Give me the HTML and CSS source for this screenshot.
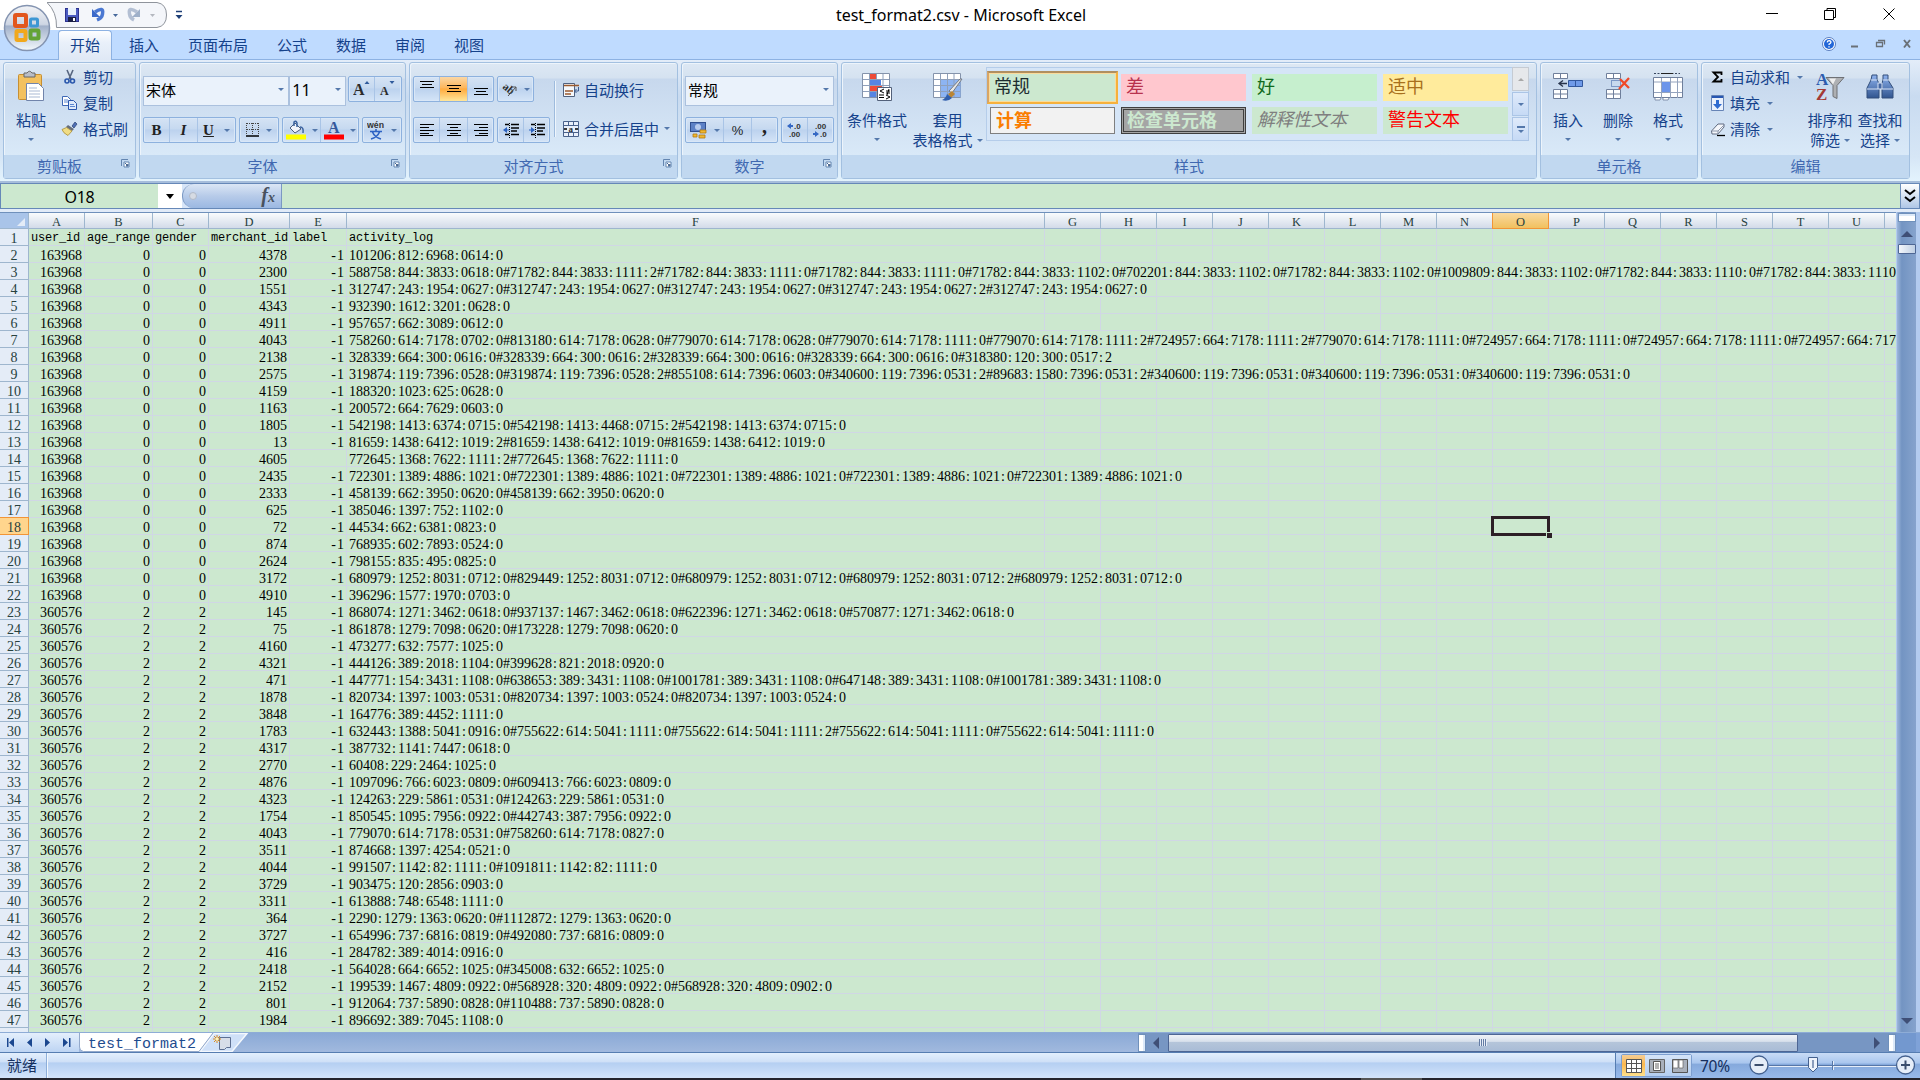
FILE: index.html
```html
<!DOCTYPE html>
<html lang="zh-CN">
<head>
<meta charset="utf-8">
<title>test_format2.csv - Microsoft Excel</title>
<link rel="stylesheet" href="styles.css">
</head>
<body>
<div class="app">
  <header class="titlebar">
    <svg class="quick" width="200" height="30" viewBox="0 0 200 30">
      <path d="M0 2.500H110Q119.500 4 119.500 15T110 27.500H9.500Q10 12 0 2.500Z" fill="#f4f6fa" stroke="#8f949c"/>
      <rect x="18.500" y="8.500" width="13" height="13" fill="#4c5cc0" stroke="#2d3390"/><rect x="21" y="8" width="8" height="7" fill="#e9f1fb"/><rect x="21" y="17" width="8" height="5" fill="#1b1f45"/><rect x="26" y="18" width="2" height="3" fill="#fff"/>
      <path d="M48 12Q57 6 55.500 14Q55 18 50 20" fill="none" stroke="#4b78d2" stroke-width="3.500"/><path d="M45 9V17H53Z" fill="#3b69c9"/>
      <path d="M66 14h5l-2.500 3Z" fill="#46689b"/>
      <path d="M90 12Q81 6 82.500 14Q83 18 87 20" fill="none" stroke="#b3bfd3" stroke-width="3.500"/><path d="M93 9V17H85Z" fill="#9fb0c9"/>
      <path d="M103 14h5l-2.500 3Z" fill="#b4b8bf"/>
      <path d="M129 11.500h6" stroke="#1e3f77" stroke-width="1.500"/><path d="M128.500 15h7l-3.500 4Z" fill="#1e3f77"/>
    </svg>
    <h1 class="title">test_format2.csv - Microsoft Excel</h1>
    <svg class="winctl" width="134" height="30" viewBox="0 0 134 30" fill="none" stroke="#000">
      <path d="M2 13.500h12M60.500 10.500h9v9h-9zM63 10V8.500h8.500V17.500H70M119.500 8.500l11 11M130.500 8.500l-11 11"/>
    </svg>
  </header>

  <nav class="tabs">
    <span class="tab active">开始</span><span class="tab">插入</span><span class="tab">页面布局</span><span class="tab">公式</span><span class="tab">数据</span><span class="tab">审阅</span><span class="tab">视图</span>
    <svg class="docctl" width="92" height="28" viewBox="0 0 92 28">
      <circle cx="7" cy="14" r="6.500" fill="#fff" stroke="#5b7fc0"/><circle cx="7" cy="14" r="5" fill="#2367d8"/><path d="M5.200 12.400q.2-1.800 2-1.800 1.900.2 1.700 1.700-.2 1-1.800 1.700v1M7 16.200v1.200" fill="none" stroke="#fff" stroke-width="1.300"/>
      <path d="M29 16.500h7" stroke="#6a7077" stroke-width="2"/>
      <path d="M54.500 12.500h6v4h-6zM56 10.500h6.500v4" fill="none" stroke="#6a7077" stroke-width="1.300"/>
      <path d="M82 10l6 7.500M88 10l-6 7.500" stroke="#6a7077" stroke-width="2"/>
    </svg>
  </nav>
  <svg class="office" width="48" height="48" viewBox="0 0 48 48">
    <defs>
      <linearGradient id="orb" x2="0" y2="1"><stop offset="0" stop-color="#f2f3f6"/><stop offset=".42" stop-color="#ced6e4"/><stop offset=".46" stop-color="#a2b1ca"/><stop offset="1" stop-color="#f2f8fc"/></linearGradient>
      <linearGradient id="steel" x2="0" y2="1"><stop offset="0" stop-color="#8eb2ee"/><stop offset="1" stop-color="#31558f"/></linearGradient>
    </defs>
    <circle cx="24" cy="24" r="22.500" fill="url(#orb)" stroke="#8494b1" stroke-width="1.500"/>
    <g fill="none" stroke-width="4">
      <rect x="12" y="11" width="11" height="11" rx="1" stroke="#e2571e"/><rect x="27.500" y="15" width="7" height="7" rx="1" stroke="#3d97d4" stroke-width="3"/>
      <rect x="13.500" y="27" width="9" height="9" rx="1" stroke="#f1a81c"/><rect x="27.500" y="26.500" width="8" height="8" rx="1" stroke="#63a336"/>
    </g>
  </svg>

  <section class="ribbon">
    <div class="group g-clip">
      <div class="body">
        <div class="big paste">
          <svg width="30" height="34" viewBox="0 0 30 34"><rect x="2.500" y="4.500" width="23" height="25" rx="1" fill="#f3c15f" stroke="#c78f33"/><path d="M8 7V3h3q2.500-3.500 5 0h3v4Z" fill="#b9bec8" stroke="#666"/><path d="M10.500 13.500h12l5 5v12h-17z" fill="#fff" stroke="#7184ab"/><path d="M13 18h8M13 21h11M13 24h11M13 27h11" stroke="#a9b9d3"/></svg>
          <b>粘贴</b><i class="car"></i>
        </div>
        <div class="smalls">
          <div class="sm"><svg width="18" height="16" viewBox="0 0 18 16"><path d="M6 1l4 9M12 1L8 10" stroke="#56657f" stroke-width="1.600"/><circle cx="6" cy="12" r="2" fill="none" stroke="#2a57ac" stroke-width="1.600"/><circle cx="11.500" cy="12" r="2" fill="none" stroke="#2a57ac" stroke-width="1.600"/></svg><b>剪切</b></div>
          <div class="sm"><svg width="18" height="16" viewBox="0 0 18 16"><path d="M1.500 1.500h5l3 3v6h-8z" fill="#fff" stroke="#3f68b5"/><path d="M7.500 5.500h5l3 3v6h-8z" fill="#dfeafb" stroke="#2b57ad"/><path d="M3 5h4M3 7h4M9 9.500h4M9 11.500h5" stroke="#5b86d1"/></svg><b>复制</b></div>
          <div class="sm"><svg width="18" height="16" viewBox="0 0 18 16"><path d="M11 5l3-4 2 2-3 4z" fill="#4f6fb5" stroke="#28406f" stroke-width=".7"/><path d="M7 4l6 4-2 2-6-4z" fill="#666e7c"/><path d="M5.500 6.500L11 10 7 14.500Q2 12 1 8.500Z" fill="#f0dc84" stroke="#a98e35" stroke-width=".8"/></svg><b>格式刷</b></div>
        </div>
      </div>
      <footer class="lab">剪贴板<svg class="launch" width="10" height="10" viewBox="0 0 10 10"><path d="M1.500 8V1.500H8" fill="none" stroke="#6385b0"/><path d="M4 4h5v5H4z" fill="#fff" stroke="#6385b0"/><path d="M5 5l3 3M8 6v2H6" stroke="#43699c"/></svg></footer>
    </div>

    <div class="group g-font">
      <div class="body two">
        <div class="line first">
          <div class="combo w147">宋体<i class="car"></i></div><div class="combo w57 num">11<i class="car"></i></div>
          <div class="box ml3"><span class="bt w26"><svg width="18" height="18" viewBox="0 0 18 18"><text x="0" y="15" class="aa" font-size="16">A</text><path d="M11.500 4h5L14 1Z" fill="#2f5a9c"/></svg></span><span class="bt w26"><svg width="18" height="18" viewBox="0 0 18 18"><text x="1" y="15" class="aa" font-size="12">A</text><path d="M10.500 1h5L13 4Z" fill="#2f5a9c"/></svg></span></div>
        </div>
        <div class="line second">
          <div class="box"><span class="bt w26 ser">B</span><span class="bt w28 ser it">I</span><span class="bt w37 ser"><u>U</u><i class="car"></i></span></div>
          <div class="box"><span class="bt w38"><svg width="14" height="16" viewBox="0 0 14 16"><path d="M.5 1v12M6.500 1v12M12.500 1v12M1 1.500h12M1 7.500h12" stroke="#444" stroke-dasharray="1 1"/><path d="M0 14h13" stroke="#000" stroke-width="1.500"/></svg><i class="car"></i></span></div>
          <div class="box"><span class="bt w38"><svg width="20" height="20" viewBox="0 0 20 20"><path d="M4 8l5-5 6 6-6 4z" fill="#f1f4fa" stroke="#4b5d7d"/><path d="M8 6V2q2-2 3 1v4M14 7q4 0 3 6" fill="none" stroke="#39619f" stroke-width="1.500"/><rect y="14.500" width="20" height="5" fill="#ff0"/></svg><i class="car"></i></span><span class="bt w37"><svg width="20" height="20" viewBox="0 0 20 20"><text x="4" y="13" class="ab" font-size="16">A</text><rect y="14.500" width="20" height="5" fill="#f00"/></svg><i class="car"></i></span></div>
          <div class="box"><span class="bt w38"><svg width="18" height="24" viewBox="0 0 18 24"><text x="0" y="10" font-size="9" class="wen" textLength="17" lengthAdjust="spacingAndGlyphs">wén</text><path d="M3 13.500h12M9 11v2M5.500 14q2 5 8.500 7M12.500 14q-2 5-8.500 7" fill="none" stroke="#2d62c4" stroke-width="1.600"/></svg><i class="car"></i></span></div>
        </div>
      </div>
      <footer class="lab">字体<svg class="launch" width="10" height="10" viewBox="0 0 10 10"><path d="M1.500 8V1.500H8" fill="none" stroke="#6385b0"/><path d="M4 4h5v5H4z" fill="#fff" stroke="#6385b0"/><path d="M5 5l3 3M8 6v2H6" stroke="#43699c"/></svg></footer>
    </div>

    <div class="group g-align">
      <div class="body split">
        <div class="two left">
          <div class="line first">
            <div class="box"><span class="bt w26"><svg width="14" height="20" viewBox="0 0 14 20"><path d="M0 2.500h14M2 5.500h10M0 8.500h14" stroke="#000"/></svg></span><span class="bt w28 hot"><svg width="14" height="20" viewBox="0 0 14 20"><path d="M0 6.500h14M2 9.500h10M0 12.500h14" stroke="#000"/></svg></span><span class="bt w25"><svg width="14" height="20" viewBox="0 0 14 20"><path d="M0 9.500h14M2 12.500h10M0 15.500h14" stroke="#000"/></svg></span></div>
            <div class="box"><span class="bt w35"><svg width="17" height="16" viewBox="0 0 17 16"><text x="1" y="9" font-size="11" class="aa" transform="rotate(40 4 8)">ab</text><path d="M7 15l8-9M11 6h4v4" fill="none" stroke="#555"/></svg><i class="car"></i></span></div>
          </div>
          <div class="line second">
            <div class="box"><span class="bt w26"><svg width="14" height="14" viewBox="0 0 14 14"><path d="M0 1.500h14M0 4.500h9M0 7.500h14M0 10.500h9M0 12.500h13" stroke="#000"/></svg></span><span class="bt w28"><svg width="14" height="14" viewBox="0 0 14 14"><path d="M0 1.500h14M3 4.500h8M0 7.500h14M3 10.500h8M0 12.500h14" stroke="#000"/></svg></span><span class="bt w25"><svg width="14" height="14" viewBox="0 0 14 14"><path d="M0 1.500h14M5 4.500h9M0 7.500h14M5 10.500h9M1 12.500h13" stroke="#000"/></svg></span></div>
            <div class="box"><span class="bt w26"><svg width="16" height="15" viewBox="0 0 16 15"><path d="M2 1.500h4M8 1.500h8M8 5h8M8 8h6M2 11.500h4M8 11.500h8" stroke="#000" stroke-width="1.500"/><path d="M6.500 0v15" stroke="#000" stroke-dasharray="1 1"/><path d="M0 7l4-3v6zM4 6.500h2v1H4z" fill="#2d62bf"/></svg></span><span class="bt w25"><svg width="16" height="15" viewBox="0 0 16 15"><path d="M2 1.500h4M8 1.500h8M8 5h8M8 8h6M2 11.500h4M8 11.500h8" stroke="#000" stroke-width="1.500"/><path d="M6.500 0v15" stroke="#000" stroke-dasharray="1 1"/><path d="M6 7L2 4v6zM0 6.500h2v1H0z" fill="#2d62bf"/></svg></span></div>
          </div>
        </div>
        <div class="wraps">
          <div class="sm tall"><svg width="17" height="16" viewBox="0 0 17 16"><path d="M.5 1.500h11v13H.5z" fill="#f5f8fc" stroke="#50617e"/><path d="M1 3.500h15M2 9h8M2 12h6" stroke="#9b5a2f" stroke-width="1.300"/><path d="M15.500 5v4H12M13.500 7l-2 2 2 2" fill="none" stroke="#3c5c91"/></svg><b>自动换行</b></div>
          <div class="sm tall"><svg width="17" height="16" viewBox="0 0 17 16"><path d="M.5.500h15v15H.5zM.5 4.500h15M.5 11.500h15M5.500.5v4M10.500.5v4M5.500 11.500v4M10.500 11.500v4" fill="#e9f0fb" stroke="#4a628c"/><text x="5.500" y="11" font-size="9" class="aa">a</text><path d="M1 8h3M12 8h3" stroke="#000" stroke-width="1.500"/></svg><b>合并后居中</b><i class="car"></i></div>
        </div>
      </div>
      <footer class="lab">对齐方式<svg class="launch" width="10" height="10" viewBox="0 0 10 10"><path d="M1.500 8V1.500H8" fill="none" stroke="#6385b0"/><path d="M4 4h5v5H4z" fill="#fff" stroke="#6385b0"/><path d="M5 5l3 3M8 6v2H6" stroke="#43699c"/></svg></footer>
    </div>

    <div class="group g-num">
      <div class="body two">
        <div class="line first"><div class="combo w149">常规<i class="car"></i></div></div>
        <div class="line second">
          <div class="box"><span class="bt w38"><svg width="18" height="18" viewBox="0 0 18 18"><rect x=".5" y="1.500" width="15" height="9" fill="#5c80c5" stroke="#304f90"/><circle cx="8" cy="6" r="3" fill="#b7cbee"/><path d="M9 14h6v3H9zM10 9h6v3h-6zM3 13h4v3H3z" fill="#f1b72c" stroke="#b27a12" stroke-width=".8"/></svg><i class="car"></i></span><span class="bt w28 pct">%</span><span class="bt w25 com">,</span></div>
          <div class="box"><span class="bt w26"><svg width="16" height="16" viewBox="0 0 16 16"><path d="M0 4l4-3v2h2v2H4v2z" fill="#3568c4"/><text x="7" y="7" class="dec">.0</text><text x="2" y="15" class="dec">.00</text></svg></span><span class="bt w25"><svg width="16" height="16" viewBox="0 0 16 16"><path d="M6 12l-4-3v2H0v2h2v2z" fill="#3568c4"/><text x="2" y="7" class="dec">.00</text><text x="7" y="15" class="dec">.0</text></svg></span></div>
        </div>
      </div>
      <footer class="lab">数字<svg class="launch" width="10" height="10" viewBox="0 0 10 10"><path d="M1.500 8V1.500H8" fill="none" stroke="#6385b0"/><path d="M4 4h5v5H4z" fill="#fff" stroke="#6385b0"/><path d="M5 5l3 3M8 6v2H6" stroke="#43699c"/></svg></footer>
    </div>

    <div class="group g-style">
      <div class="body">
        <div class="big w66">
          <svg width="32" height="34" viewBox="0 0 32 34"><path d="M1.500 3.500h27v24h-27z" fill="#fff" stroke="#8493ab"/><path d="M8.500 4v23M15.500 4v23M22 4v23M2 9.500h26M2 15.500h26M2 21.500h26" stroke="#8fa0bb"/><path d="M9 4h6v5H9zM9 16h12v5H9z" fill="#ee4b37"/><path d="M9 10h11v5H9zM9 22h6v5H9z" fill="#5685e2"/><path d="M16.500 17.500h14v13h-14z" fill="#fff" stroke="#53617a"/><path d="M23 19l-4 2 4 2M18 25h5M18 27.500h5M25 21h4M25 23h4M28 19l-2 6M25 25l4 2-4 2" fill="none" stroke="#000"/></svg>
          <b>条件格式</b><i class="car"></i>
        </div>
        <div class="big w78">
          <svg width="32" height="34" viewBox="0 0 32 34"><path d="M1.500 3.500h27v24h-27z" fill="#fff" stroke="#8493ab"/><path d="M8.500 10h20v17h-20z" fill="#8db4f3"/><path d="M8.500 4v23M15.500 4v23M22 4v23M2 9.500h26M2 15.500h26M2 21.500h26" stroke="#8fa0bb"/><path d="M30 9L20 23l-3-2L28 9z" fill="#e6e6e6" stroke="#747a85"/><path d="M20 21l3 3-4 4-3-4z" fill="#bb8533"/><path d="M15 24l5 4q-4 4-10 2 4-2 5-6z" fill="#315fad"/></svg>
          <b>套用</b><b>表格格式<i class="car"></i></b>
        </div>
        <div class="gallery">
          <div class="styles">
            <span class="st normal">常规</span><span class="st bad">差</span><span class="st good">好</span><span class="st neutral">适中</span>
            <span class="st calc">计算</span><span class="st check">检查单元格</span><span class="st expl">解释性文本</span><span class="st warn">警告文本</span>
          </div>
          <div class="galbtns"><span class="off"><i class="car up"></i></span><span><i class="car"></i></span><span><i class="bar"></i><i class="car"></i></span></div>
        </div>
      </div>
      <footer>样式</footer>
    </div>

    <div class="group g-cell">
      <div class="body">
        <div class="big w50"><svg width="32" height="34" viewBox="0 0 32 34"><path d="M1.500 3.500h14v5h-14zM8.500 4v4M1.500 19.500h14v9h-14zM8.500 20v9M2 24h13" fill="#fff" stroke="#6f7f9b"/><path d="M16.500 10.500h14v6h-14z" fill="#6f9ae9" stroke="#31579e"/><path d="M23.500 11v5" stroke="#31579e"/><path d="M8 13.500h7M11 10.500l-4 3 4 3" fill="none" stroke="#27334b" stroke-width="1.300"/></svg><b>插入</b><i class="car"></i></div>
        <div class="big w50"><svg width="32" height="34" viewBox="0 0 32 34"><path d="M4.500 3.500h14v5h-14zM11.500 4v4M4.500 19.500h14v9h-14zM11.500 20v9M5 24h13" fill="#fff" stroke="#6f7f9b"/><path d="M9.500 10.500h9v6h-9z" fill="none" stroke="#31579e" stroke-dasharray="1 1"/><path d="M18 9l9 9M27 8l-10 11" stroke="#f04a28" stroke-width="2.300"/></svg><b>删除</b><i class="car"></i></div>
        <div class="big w50"><svg width="32" height="34" viewBox="0 0 32 34"><path d="M2 3.500h26" stroke="#39475f" stroke-dasharray="2 1.500"/><path d="M9 3.500h12" stroke="#222"/><path d="M1.500 7.500h29v20h-29z" fill="#fff" stroke="#6f7f9b"/><path d="M9.500 8v20M18.500 8v20M25.500 8v20M2 12h28M2 22.500h28" stroke="#94a3bd"/><path d="M10 12h8v10h-8z" fill="#6d95ea"/><path d="M3 28v2h5l1-2M11 28v2h5l1-2" fill="#fff" stroke="#8291ab"/></svg><b>格式</b><i class="car"></i></div>
      </div>
      <footer>单元格</footer>
    </div>

    <div class="group g-edit">
      <div class="body">
        <div class="smalls">
          <div class="sm"><svg width="16" height="16" viewBox="0 0 16 16"><path d="M11.500 6V3.500h-8L8 8l-4.500 4.500h8V10" fill="none" stroke="#000" stroke-width="1.800"/></svg><b>自动求和</b><i class="car"></i></div>
          <div class="sm"><svg width="16" height="16" viewBox="0 0 16 16"><path d="M1.500.5h12v15h-12z" fill="#eaf1fc" stroke="#6684b6"/><path d="M2 1h11v2H2z" fill="#2757b2"/><path d="M6 5h3v4h3l-4.500 5L3 9h3z" fill="#2e6ad0"/></svg><b>填充</b><i class="car"></i></div>
          <div class="sm"><svg width="16" height="16" viewBox="0 0 16 16"><path d="M1.500 10L8 3h6v3l-6 7H2z" fill="#f5f7fb" stroke="#606b80"/><path d="M2 10h6l6-6M8 10v3" fill="none" stroke="#8b97ab"/><path d="M7 14.500h8" stroke="#000" stroke-width="1.300"/></svg><b>清除</b><i class="car"></i></div>
        </div>
        <div class="big w50"><svg width="32" height="34" viewBox="0 0 32 34"><text x="2" y="15" class="az1" font-size="17">A</text><text x="2" y="30" class="az2" font-size="17">Z</text><path d="M12 7.500h18l-7 8v13l-4-2v-11z" fill="#aeb0b3" stroke="#6f7175"/><path d="M15 8.500h7l-3 6z" fill="#eee"/></svg><b>排序和</b><b>筛选<i class="car"></i></b></div>
        <div class="big w50"><svg width="32" height="34" viewBox="0 0 32 34"><path d="M8 5h5v5l2 3v15H3V18L7 10zM19 5h5v5l5 8v10H18V13l1-3z" fill="url(#steel)" stroke="#334f7b"/><path d="M14 13h4v6h-4zM3 19h11M18 19h11M7 10h6M19 10h6" stroke="#d9e4f6" fill="#4466a2"/></svg><b>查找和</b><b>选择<i class="car"></i></b></div>
      </div>
      <footer>编辑</footer>
    </div>
  </section>

  <section class="fbar">
    <div class="name">O18</div>
    <div class="drop"><i class="car black"></i></div>
    <div class="fx"><span class="knob"></span><em>f<small>x</small></em></div>
    <div class="input"></div>
    <div class="expand"><svg width="12" height="14" viewBox="0 0 12 14"><path d="M1 1l5 4 5-4M1 8l5 4 5-4" fill="none" stroke="#000" stroke-width="2"/></svg></div>
  </section>

  <main class="work">
    <div class="sheet" id="sheet"></div>
    <div class="vscroll"><span class="vsplit"></span><i class="arr up"></i><span class="vthumb"></span><i class="arr down"></i></div>
  </main>

  <div class="sheetbar">
    <svg class="nav" width="79" height="19" viewBox="0 0 79 19" fill="#1b478f"><path d="M7 5h1.500v9H7zM14 5v9l-5-4.500zM32 5v9l-5-4.500zM45 5v9l5-4.500zM63 5v9l5-4.500zM69 5h1.500v9H69z"/></svg>
    <svg class="tabshape" width="170" height="19" viewBox="0 0 170 19"><path d="M121 18.500L135 .5h33L153 18.500z" fill="#cfe0f8" stroke="#f4f8fd" stroke-width="1.500"/><path d="M.5 0v14q0 4 4 4.500H120L134 0z" fill="#fff"/><path d="M.5 0v14q0 4 4 4.500H120L134 0" fill="none" stroke="#93a9cb"/><path d="M140.500 4.500h11v10h-4l-2 2h-5z" fill="#d7dde8" stroke="#5d6f92"/><path d="M138 2v8M134 6h8M135 3l6 6M141 3l-6 6" stroke="#d88a1c"/><circle cx="138" cy="6" r="1.500" fill="#fff3b0"/><text x="9" y="15" class="tabname">test_format2</text></svg>
    <div class="fill"></div>
    <div class="hscroll"><span class="hsplit"></span><i class="arr left"></i><span class="hthumb"><em></em></span><i class="arr right"></i><span class="hsplit"></span></div>
    <div class="corner"></div>
  </div>

  <footer class="status">
    <span class="ready">就绪</span><span class="rest"></span>
    <div class="tools">
      <div class="views">
        <span class="hot"><svg width="16" height="14" viewBox="0 0 16 14"><path d="M.5.500h15v13H.5z" fill="#fff" stroke="#555"/><path d="M5.500 0v14M10.500 0v14M0 4.500h16M0 9.500h16" stroke="#555"/></svg></span>
        <span><svg width="16" height="14" viewBox="0 0 16 14"><path d="M.5.500h15v13H.5z" fill="#a9b0bb" stroke="#666"/><path d="M4.500 2.500h7v9h-7z" fill="#fff" stroke="#555"/><path d="M6 5h4M6 7h4M6 9h4" stroke="#666"/></svg></span>
        <span><svg width="16" height="14" viewBox="0 0 16 14"><path d="M.5.500h15v13H.5z" fill="#a9b0bb" stroke="#555"/><path d="M1 1h5v8H1zM7 1h4v8H7z" fill="#fff" stroke="#666" stroke-width=".7"/></svg></span>
      </div>
      <span class="pctz">70%</span>
      <svg class="zoom" width="166" height="25" viewBox="0 0 166 25"><path d="M20 13.500h128M84.500 8v9" stroke="#e6eef9"/><path d="M20 12.500h128M83.500 8v9" stroke="#5777a8"/><circle cx="10" cy="12" r="9" fill="#e5edf8" stroke="#44618f" stroke-width="1.300"/><path d="M5.500 12h9" stroke="#3a4d6c" stroke-width="2"/><circle cx="156.500" cy="12" r="9" fill="#e5edf8" stroke="#44618f" stroke-width="1.300"/><path d="M152 12h9M156.500 7.500v9" stroke="#3a4d6c" stroke-width="2"/><path d="M59.500 4.500h9v10l-4.500 4.500-4.500-4.500z" fill="#eef3fb" stroke="#44618f"/><path d="M64 7v8" stroke="#8a9dbd" stroke-width="2"/></svg>
    </div>
  </footer>
  <div class="edge"></div>
</div>
<script src="script.js"></script>
</body>
</html>
```
FILE: styles.css
```css
* { box-sizing: border-box; }
body { margin: 0; overflow: hidden; background: #fff; font-family: "Noto Sans CJK SC", sans-serif; font-size: 15px; color: #15428b; }
.app { position: relative; width: 1920px; height: 1080px; display: flex; flex-direction: column; }
b, em, h1 { font-weight: normal; font-style: normal; }
svg { display: block; flex: none; }
svg text { font-family: "Liberation Serif", serif; }

.titlebar { height: 30px; display: flex; align-items: center; background: #fff; padding-left: 47px; }
.title { flex: 1; margin: 0; text-align: center; font: 16px/30px "Noto Sans", sans-serif; color: #000; padding-right: 89px; }
.winctl { margin-right: 22px; }
.office { position: absolute; left: 3px; top: 4px; }

.tabs { height: 30px; background: #bfdbff; display: flex; align-items: flex-start; padding-left: 58px; border-bottom: 1px solid #8db2e3; }
.tab { height: 29px; line-height: 29px; margin-right: 29px; }
.tab.active { width: 54px; height: 30px; text-align: center; margin-right: 17px; background: linear-gradient(#fdfeff, #e9f0fa 40%, #dfe8f5); border: 1px solid #8db2e3; border-bottom: 0; border-radius: 4px 4px 0 0; line-height: 27px; }
.docctl { margin-left: auto; margin-right: 6px; }

.ribbon { height: 121px; display: flex; gap: 3px; padding: 2px 3px 0; background: linear-gradient(#e3edf9, #c9dbf0 30%, #d6e6f6 80%, #e3f3fd); }
.group { height: 117px; border: 1px solid #a3c0e0; border-radius: 3px; background: linear-gradient(#dde8f4, #d5e2f0 15px, #c7d8ed 16px, #d9e9f8 92px); box-shadow: inset 1px 1px #edf4fb; display: flex; flex-direction: column; }
.group .body { height: 92px; display: flex; }
.group footer { height: 23px; background: #c1d8f0; text-align: center; line-height: 22px; color: #4068b0; position: relative; }
.group .lab { padding-right: 20px; }
.launch { position: absolute; right: 5px; top: 3px; }
.g-clip { width: 133px; } .g-font { width: 267px; } .g-align { width: 269px; } .g-num { width: 157px; } .g-style { width: 696px; } .g-cell { width: 158px; } .g-edit { width: 209px; }
.car { display: inline-block; flex: none; width: 0; height: 0; border: 3px solid transparent; border-top-color: #5478ab; border-bottom: 0; }
.car.up { border-top: 0; border-bottom: 3px solid #a8a8a8; }
.car.black { border-width: 5px 4.500px 0; border-top-color: #000; }

.big { display: flex; flex-direction: column; align-items: center; padding-top: 7px; white-space: nowrap; }
.big b { line-height: 20px; height: 20px; }
.big svg { margin-bottom: 6px; }
.big > .car { margin-top: 8px; }
.big b .car { margin-left: 4px; vertical-align: 4px; }
.paste { width: 54px; }
.w50 { width: 50px; } .w66 { width: 70px; } .w78 { width: 71px; }
.g-cell .body { padding-left: 2px; }
.smalls { padding: 1px 0 0 3px; }
.g-edit .smalls { width: 103px; padding-left: 8px; }
.sm { height: 26px; display: flex; align-items: center; white-space: nowrap; }
.sm b { margin-left: 4px; line-height: 24px; }
.sm .car { margin-left: 7px; }

.two { flex-direction: column; padding: 0 3px; }
.line { display: flex; gap: 3px; }
.line.first { height: 41px; margin-top: 13px; }
.line.second { height: 27px; }
.g-font .first { gap: 0; }
.combo { height: 30px; background: #eaf2fb; border: 1px solid #abc1de; color: #000; display: flex; justify-content: space-between; align-items: center; padding: 0 4px 3px 2px; }
.combo.num { font-family: "Noto Sans", sans-serif; font-size: 16px; }
.w147 { width: 147px; } .w57 { width: 57px; } .w149 { width: 149px; }
.ml3 { margin-left: 2px; }
.box { height: 26px; display: flex; border: 1px solid #8db1de; border-radius: 2px; background: linear-gradient(#d5e3f4, #c6d9f0 45%, #bcd2ee 50%, #d4e4f7); box-shadow: inset 0 0 0 1px #d9e7f7; }
.bt { display: flex; align-items: center; justify-content: center; gap: 6px; border-right: 1px solid #a9c4e6; }
.bt:last-child { border-right: 0; }
.w25 { width: 25px; } .w26 { width: 26px; } .w28 { width: 28px; } .w35 { width: 35px; } .w37 { width: 37px; } .w38 { width: 38px; }
.hot { background: linear-gradient(#fbd7a5, #fdb65c 45%, #ffab3f 50%, #ffe69a); }
.ser { font: bold 15px "Liberation Serif", serif; color: #222; gap: 10px; }
.it { font-style: italic; }
.aa { font-weight: bold; fill: #2b2b2b; }
.ab { font-weight: bold; fill: #35599c; }
.az1 { font-weight: bold; fill: #2d5cae; }
.az2 { font-weight: bold; fill: #a33a36; }
svg .wen { font-family: "Liberation Sans", sans-serif; font-weight: bold; fill: #333; }
svg .dec { font: bold 8px "Liberation Sans", sans-serif; fill: #333; }
.pct { font: 13px "Liberation Sans", sans-serif; color: #222; }
.com { font: bold 20px/10px "Liberation Serif", serif; color: #222; padding-bottom: 8px; }

.split .left { width: 142px; }
.split .left .line { width: 142px; }
.wraps { margin-top: 18px; margin-left: 2px; height: 56px; border-left: 1px solid #9ebbdd; box-shadow: inset 1px 0 #eef5fc; padding-left: 8px; }
.wraps .sm { height: 39px; }
.wraps .sm:first-child { margin-top: -11px; }
.wraps .sm .car { margin-left: 5px; }

.gallery { margin: 4px 0 0 3px; width: 543px; height: 74px; display: flex; background: #d5e5f7; border: 1px solid #b5cdea; }
.styles { width: 526px; display: grid; grid-template-columns: repeat(4, 125px); grid-template-rows: 27px 27px; gap: 6px; padding: 6px 0 0 3px; }
.st { font-size: 18px; line-height: 23px; padding-left: 5px; white-space: nowrap; }
.normal { margin: -3px; padding: 0 0 0 5px; line-height: 24px; background: #cce8cf; border: 2px solid #f6b13c; border-top-color: #b08f60; border-left-color: #d8a565; box-shadow: inset 0 0 0 1px #fadb9b; color: #1d2d2f; }
.bad { background: #ffc7ce; color: #b8334e; } .good { background: #c6efce; color: #106a1c; } .neutral { background: #ffeb9c; color: #a8701c; }
.calc { background: #f2f2f2; border: 1px solid #7f7f7f; color: #fa7d00; font-weight: bold; line-height: 22px; }
.check { background: #a5a5a5; border: 3px double #3f3f3f; color: #cce8cf; font-weight: bold; line-height: 19px; padding-left: 3px; }
.expl { background: #cce8cf; color: #7f7f7f; font-style: italic; } .warn { background: #cce8cf; color: #f00; }
.galbtns { width: 17px; display: flex; flex-direction: column; gap: 1px; margin: -1px -1px -1px 0; }
.galbtns span { flex: 1; display: flex; flex-direction: column; gap: 2px; align-items: center; justify-content: center; border: 1px solid #abc5e6; background: linear-gradient(#dfeafa, #c6daf5); }
.galbtns .off { background: #e6e8eb; border-color: #c5cbd3; }
.bar { width: 8px; height: 2px; background: #5478ab; }

.fbar { height: 26px; margin-top: 2px; border: 1px solid #6688b8; display: flex; background: #d7e5f8; box-shadow: 0 -2px #a6bddb; }
.name { width: 157px; background: #cce8cf; color: #000; text-align: center; font: 16px/26px "Noto Sans", sans-serif; letter-spacing: -.3px; }
.drop { width: 24px; background: #fff; display: flex; align-items: center; justify-content: center; }
.fx { width: 100px; display: flex; align-items: center; justify-content: space-between; padding: 0 6px; border-radius: 13px 0 0 13px; background: linear-gradient(#dbe6f5, #b7cbe9 50%, #9bb8e2); border: 1px solid #7b98c3; border-width: 0 1px 0 1px; }
.knob { width: 8px; height: 8px; border-radius: 4px; background: #d6dbe3; border: 1px solid #b1bac9; }
.fx em { font: italic bold 20px/20px "Liberation Serif", serif; color: #48525f; }
.fx small { font-size: 14px; }
.input { flex: 1; background: #cce8cf; }
.expand { width: 19px; border-left: 1px solid #6f90bb; background: linear-gradient(#fff, #afc6e6); display: flex; align-items: center; justify-content: center; }

.work { flex: none; height: 823px; padding-top: 3px; display: flex; background: #e1ebf8; }
.sheet { width: 1896px; height: 820px; overflow: hidden; background: #cce8cf; border-top: 1px solid #6f90bb; }
.row { display: grid; grid-template-columns: 29px 56px 68px 56px 81px 57px 698px repeat(15, 56px) 12px; height: 17px; }
.cell { border-right: 1px solid #d0d7e5; border-bottom: 1px solid #d0d7e5; height: 17px; padding: 0 2px; font: 14px/19px "Liberation Serif", serif; font-kerning: none; color: #000; white-space: nowrap; position: relative; }
.cell.r { text-align: right; }
.cell.t { font: 12px/18px "Liberation Mono", monospace; letter-spacing: -.2px; }
.cell .c { margin-left: 1px; letter-spacing: 2.110px; }
.cell .m { margin-left: 1.340px; letter-spacing: 1px; }
.cell.h { background: #e4ecf7; border-color: #9eb6ce; color: #27413e; text-align: center; padding: 0; }
.row.cols { height: 16px; }
.cols .cell { height: 16px; line-height: 18px; font-size: 12.500px; background: linear-gradient(#f9fcfd, #d3dbe9); border-color: #9eb6ce; color: #27413e; text-align: center; }
.cols .cell:first-child { background: #a9c4e9; }
.cols .cell:first-child::after { content: ""; position: absolute; right: 3px; bottom: 2px; border: 4px solid transparent; border-right-color: #e4ecf7; border-bottom-color: #e4ecf7; }
.cols .cell.sel { background: linear-gradient(#f9d99f, #f1c15f); border-color: #f29536; box-shadow: -1px 0 #f29536; }
.cell.h.sel { background: #ffd58d; border-color: #f29536; box-shadow: 0 -1px #f29536; }
.pick { position: absolute; z-index: 1; left: -2px; top: -2px; width: 59px; height: 20px; border: 3px solid #2c1f26; }
.pick::after { content: ""; position: absolute; right: -5px; bottom: -5px; width: 5px; height: 5px; background: #2c1f26; border: 1px solid #cce8cf; border-width: 1px 0 0 1px; box-sizing: content-box; }

.vscroll { width: 24px; border: solid #b3cbef; border-width: 0 4px 0 1px; background: linear-gradient(90deg, #9db6db, #7394c2 25%, #86a3cd); display: flex; flex-direction: column; align-items: center; }
.vsplit { width: 18px; height: 9px; margin-top: 1px; background: #fff; border: 1px solid #6f90bb; box-shadow: inset 0 2px #dde9f8; }
.arr { width: 0; height: 0; border: 6px solid transparent; flex: none; }
.arr.up { border-bottom-color: #3f4f76; border-top: 0; margin-top: 9px; }
.arr.down { border-top-color: #3f4f76; border-bottom: 0; margin-top: auto; margin-bottom: 8px; }
.vthumb { width: 18px; height: 10px; margin-top: 7px; border: 1px solid #4e6694; border-radius: 1px; background: linear-gradient(90deg, #f4f7fb, #bfcfe4); }

.sheetbar { flex: none; height: 20px; border-top: 1px solid #8eacd6; display: flex; background: linear-gradient(#8aa9d6, #a1b9de); }
.nav { background: linear-gradient(#e4effc, #bdd4f3); }
svg .tabname { font-family: "Liberation Mono", monospace; font-size: 15px; fill: #1e4c8f; }
.fill { flex: 1; }
.hscroll { width: 758px; display: flex; align-items: center; background: #7796c3; }
.hsplit { width: 8px; height: 18px; background: #fff; border: 1px solid #6f90bb; box-shadow: inset -2px 0 #dde9f8; }
.arr.left { border-right-color: #3f4f76; border-left: 0; margin-left: 7px; }
.arr.right { border-left-color: #3f4f76; border-right: 0; margin-left: auto; margin-right: 8px; }
.hthumb { width: 630px; height: 18px; margin-left: 9px; border: 1px solid #4e6694; border-radius: 1px; background: linear-gradient(#eef2f7, #d9e1ec 40%, #b5c5da 45%, #a9bcd6); display: flex; align-items: center; justify-content: center; }
.hthumb em { width: 8px; height: 7px; background: repeating-linear-gradient(90deg, #647ca4 0 1px, #e7edf6 1px 2px); }
.corner { width: 24px; background: #7398cf; border-right: 4px solid #7fa2d8; }

.status { flex: none; height: 26px; border-top: 1px solid #567db1; display: flex; align-items: center; background: linear-gradient(#e3effd, #cfe0f7 35%, #b5cff2 40%, #d3e4fa); color: #15305f; }
.ready { width: 47px; height: 25px; line-height: 24px; padding-left: 7px; border-right: 1px solid #8daed9; }
.rest { flex: 1; height: 25px; border-left: 1px solid #f2f8fe; }
.tools { width: 305px; height: 25px; display: flex; align-items: center; border-left: 1px solid #567db1; background: linear-gradient(#c9dcf6, #a9c6ee 40%, #85a9dc 45%, #98baea); }
.views { display: flex; margin-left: 5px; height: 23px; border: 1px solid #7d9fd0; border-radius: 2px; }
.views span { width: 23px; display: flex; align-items: center; justify-content: center; background: linear-gradient(#d5e4f8, #b4cef0); }
.views .hot { background: linear-gradient(#f5cd96, #fcb84e 45%, #ffe18c); }
.pctz { width: 57px; padding-left: 8px; font: 15.500px/24px "Noto Sans", sans-serif; letter-spacing: -.3px; }
.edge { flex: none; height: 2px; background: linear-gradient(90deg, #24242c 0 1361px, #555 1361px 1422px, #24242c 1422px); }
```
FILE: script.js
```js
// user_id, age_range, gender, merchant_id, label, activity_log
const rows = `163968 0 0 4378 -1 101206:812:6968:0614:0
163968 0 0 2300 -1 588758:844:3833:0618:0#71782:844:3833:1111:2#71782:844:3833:1111:0#71782:844:3833:1111:0#71782:844:3833:1102:0#702201:844:3833:1102:0#71782:844:3833:1102:0#1009809:844:3833:1102:0#71782:844:3833:1110:0#71782:844:3833:1110
163968 0 0 1551 -1 312747:243:1954:0627:0#312747:243:1954:0627:0#312747:243:1954:0627:0#312747:243:1954:0627:2#312747:243:1954:0627:0
163968 0 0 4343 -1 932390:1612:3201:0628:0
163968 0 0 4911 -1 957657:662:3089:0612:0
163968 0 0 4043 -1 758260:614:7178:0702:0#813180:614:7178:0628:0#779070:614:7178:0628:0#779070:614:7178:1111:0#779070:614:7178:1111:2#724957:664:7178:1111:2#779070:614:7178:1111:0#724957:664:7178:1111:0#724957:664:7178:1111:0#724957:664:717
163968 0 0 2138 -1 328339:664:300:0616:0#328339:664:300:0616:2#328339:664:300:0616:0#328339:664:300:0616:0#318380:120:300:0517:2
163968 0 0 2575 -1 319874:119:7396:0528:0#319874:119:7396:0528:2#855108:614:7396:0603:0#340600:119:7396:0531:2#89683:1580:7396:0531:2#340600:119:7396:0531:0#340600:119:7396:0531:0#340600:119:7396:0531:0
163968 0 0 4159 -1 188320:1023:625:0628:0
163968 0 0 1163 -1 200572:664:7629:0603:0
163968 0 0 1805 -1 542198:1413:6374:0715:0#542198:1413:4468:0715:2#542198:1413:6374:0715:0
163968 0 0 13 -1 81659:1438:6412:1019:2#81659:1438:6412:1019:0#81659:1438:6412:1019:0
163968 0 0 4605 _ 772645:1368:7622:1111:2#772645:1368:7622:1111:0
163968 0 0 2435 -1 722301:1389:4886:1021:0#722301:1389:4886:1021:0#722301:1389:4886:1021:0#722301:1389:4886:1021:0#722301:1389:4886:1021:0
163968 0 0 2333 -1 458139:662:3950:0620:0#458139:662:3950:0620:0
163968 0 0 625 -1 385046:1397:752:1102:0
163968 0 0 72 -1 44534:662:6381:0823:0
163968 0 0 874 -1 768935:602:7893:0524:0
163968 0 0 2624 -1 798155:835:495:0825:0
163968 0 0 3172 -1 680979:1252:8031:0712:0#829449:1252:8031:0712:0#680979:1252:8031:0712:0#680979:1252:8031:0712:2#680979:1252:8031:0712:0
163968 0 0 4910 -1 396296:1577:1970:0703:0
360576 2 2 145 -1 868074:1271:3462:0618:0#937137:1467:3462:0618:0#622396:1271:3462:0618:0#570877:1271:3462:0618:0
360576 2 2 75 -1 861878:1279:7098:0620:0#173228:1279:7098:0620:0
360576 2 2 4160 -1 473277:632:7577:1025:0
360576 2 2 4321 -1 444126:389:2018:1104:0#399628:821:2018:0920:0
360576 2 2 471 -1 447771:154:3431:1108:0#638653:389:3431:1108:0#1001781:389:3431:1108:0#647148:389:3431:1108:0#1001781:389:3431:1108:0
360576 2 2 1878 -1 820734:1397:1003:0531:0#820734:1397:1003:0524:0#820734:1397:1003:0524:0
360576 2 2 3848 -1 164776:389:4452:1111:0
360576 2 2 1783 -1 632443:1388:5041:0916:0#755622:614:5041:1111:0#755622:614:5041:1111:2#755622:614:5041:1111:0#755622:614:5041:1111:0
360576 2 2 4317 -1 387732:1141:7447:0618:0
360576 2 2 2770 -1 60408:229:2464:1025:0
360576 2 2 4876 -1 1097096:766:6023:0809:0#609413:766:6023:0809:0
360576 2 2 4323 -1 124263:229:5861:0531:0#124263:229:5861:0531:0
360576 2 2 1754 -1 850545:1095:7956:0922:0#442743:387:7956:0922:0
360576 2 2 4043 -1 779070:614:7178:0531:0#758260:614:7178:0827:0
360576 2 2 3511 -1 874668:1397:4254:0521:0
360576 2 2 4044 -1 991507:1142:82:1111:0#1091811:1142:82:1111:0
360576 2 2 3729 -1 903475:120:2856:0903:0
360576 2 2 3311 -1 613888:748:6548:1111:0
360576 2 2 364 -1 2290:1279:1363:0620:0#1112872:1279:1363:0620:0
360576 2 2 3727 -1 654996:737:6816:0819:0#492080:737:6816:0809:0
360576 2 2 416 -1 284782:389:4014:0916:0
360576 2 2 2418 -1 564028:664:6652:1025:0#345008:632:6652:1025:0
360576 2 2 2152 -1 199539:1467:4809:0922:0#568928:320:4809:0922:0#568928:320:4809:0902:0
360576 2 2 801 -1 912064:737:5890:0828:0#110488:737:5890:0828:0
360576 2 2 1984 -1 896692:389:7045:1108:0`.split('\n').map(r => r.split(' '));

const CHAR = 7, LOG_WIDTH = 698, COL_WIDTH = 56, EXTRA = 16;
// Give narrow punctuation the same advance as a digit.
const even = s => s.replace(/:/g, '<span class="c">:</span>').replace(/-/g, '<span class="m">-</span>');
const cell = (cls, html, style = '') => `<div class="cell ${cls}"${style}>${html}</div>`;
const blanks = (n, picked) => Array.from({ length: n }, (_, i) => cell('', picked && i === 8 ? '<div class="pick"></div>' : '')).join('');

let html = '<div class="row cols">' + cell('', '') +
  [...'ABCDEFGHIJKLMNOPQRSTU'].map(c => cell(c === 'O' ? 'sel' : '', c)).join('') + cell('', '') + '</div>';
html += '<div class="row">' + cell('h', '1') +
  ['user_id', 'age_range', 'gender', 'merchant_id', 'label', 'activity_log'].map(t => cell('t', t)).join('') + blanks(EXTRA) + '</div>';
rows.forEach((r, i) => {
  const n = i + 2;
  // A long log runs over the empty columns to its right.
  const over = Math.min(EXTRA, Math.max(0, Math.ceil((r[5].length * CHAR + 3 - LOG_WIDTH) / COL_WIDTH)));
  html += '<div class="row">' + cell(n === 18 ? 'h sel' : 'h', n) +
    r.slice(0, 5).map(v => cell('r', v === '_' ? '' : even(v))).join('') +
    cell('', even(r[5]), ` style="grid-column: span ${over + 1}"`) + blanks(EXTRA - over, n === 18) + '</div>';
});
html += '<div class="row">' + cell('h', '') + blanks(6 + EXTRA) + '</div>';
document.getElementById('sheet').innerHTML = html;
```
